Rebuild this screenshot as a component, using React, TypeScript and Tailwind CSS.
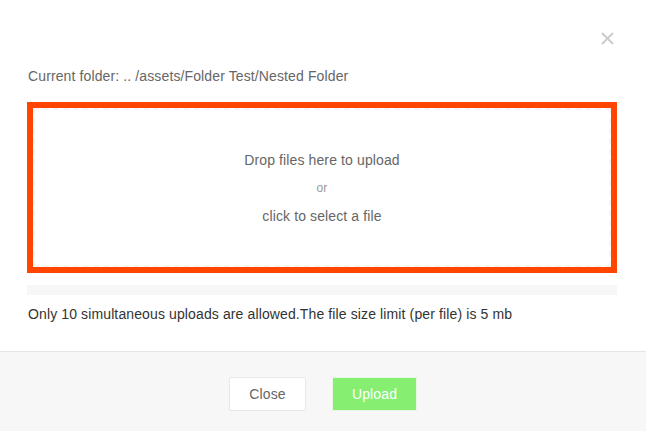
import React from 'react';

const App: React.FC = () => {
  return (
    <div
      className="w-[646px] h-[431px] bg-white flex flex-col relative tracking-[0.12px]"
      style={{ fontFamily: '"Liberation Sans", Arial, sans-serif' }}
    >
      <button className="absolute right-[30px] top-[29px] w-[18px] h-[18px] flex items-center justify-center text-[#cccccc]">
        <svg width="13" height="13" viewBox="0 0 13 13" fill="none" stroke="currentColor" strokeWidth="2">
          <path d="M1 1 L12 12 M12 1 L1 12" />
        </svg>
      </button>

      <div className="flex-1 px-[27px] pt-[66px]">
        <p className="text-[14px] leading-[20px] text-[#666666] pl-px">
          Current folder: .. /assets/Folder Test/Nested Folder
        </p>

        <div className="mt-[16px] w-[590px] h-[171px] border-[6px] border-[#ff4500] cursor-pointer">
          <div className="h-full border-2 border-dashed border-[#f5f5f5] flex flex-col items-center justify-center gap-[8px]">
            <p className="text-[14px] leading-[20px] text-[#666666]">Drop files here to upload</p>
            <p className="text-[12px] leading-[20px] text-[#999999]">or</p>
            <p className="text-[14px] leading-[20px] text-[#666666]">click to select a file</p>
          </div>
        </div>

        <div className="mt-[12px] w-[590px] h-[10px] bg-[#f7f7f7]" />

        <p className="mt-[9px] text-[14px] leading-[20px] text-[#333333] pl-px">
          Only 10 simultaneous uploads are allowed.The file size limit (per file) is 5 mb
        </p>
      </div>

      <div className="h-[80px] border-t border-[#e5e5e5] bg-[#f7f7f7] flex justify-center items-start pt-[25px] gap-[26px]">
        <button className="w-[77px] h-[34px] bg-white border border-[#e8e8e8] rounded-[2px] text-[14px] text-[#666666]">
          Close
        </button>
        <button className="w-[85px] h-[34px] bg-[#86ef72] border border-[#e8f5e4] text-[14px] text-white">
          Upload
        </button>
      </div>
    </div>
  );
};

export default App;
